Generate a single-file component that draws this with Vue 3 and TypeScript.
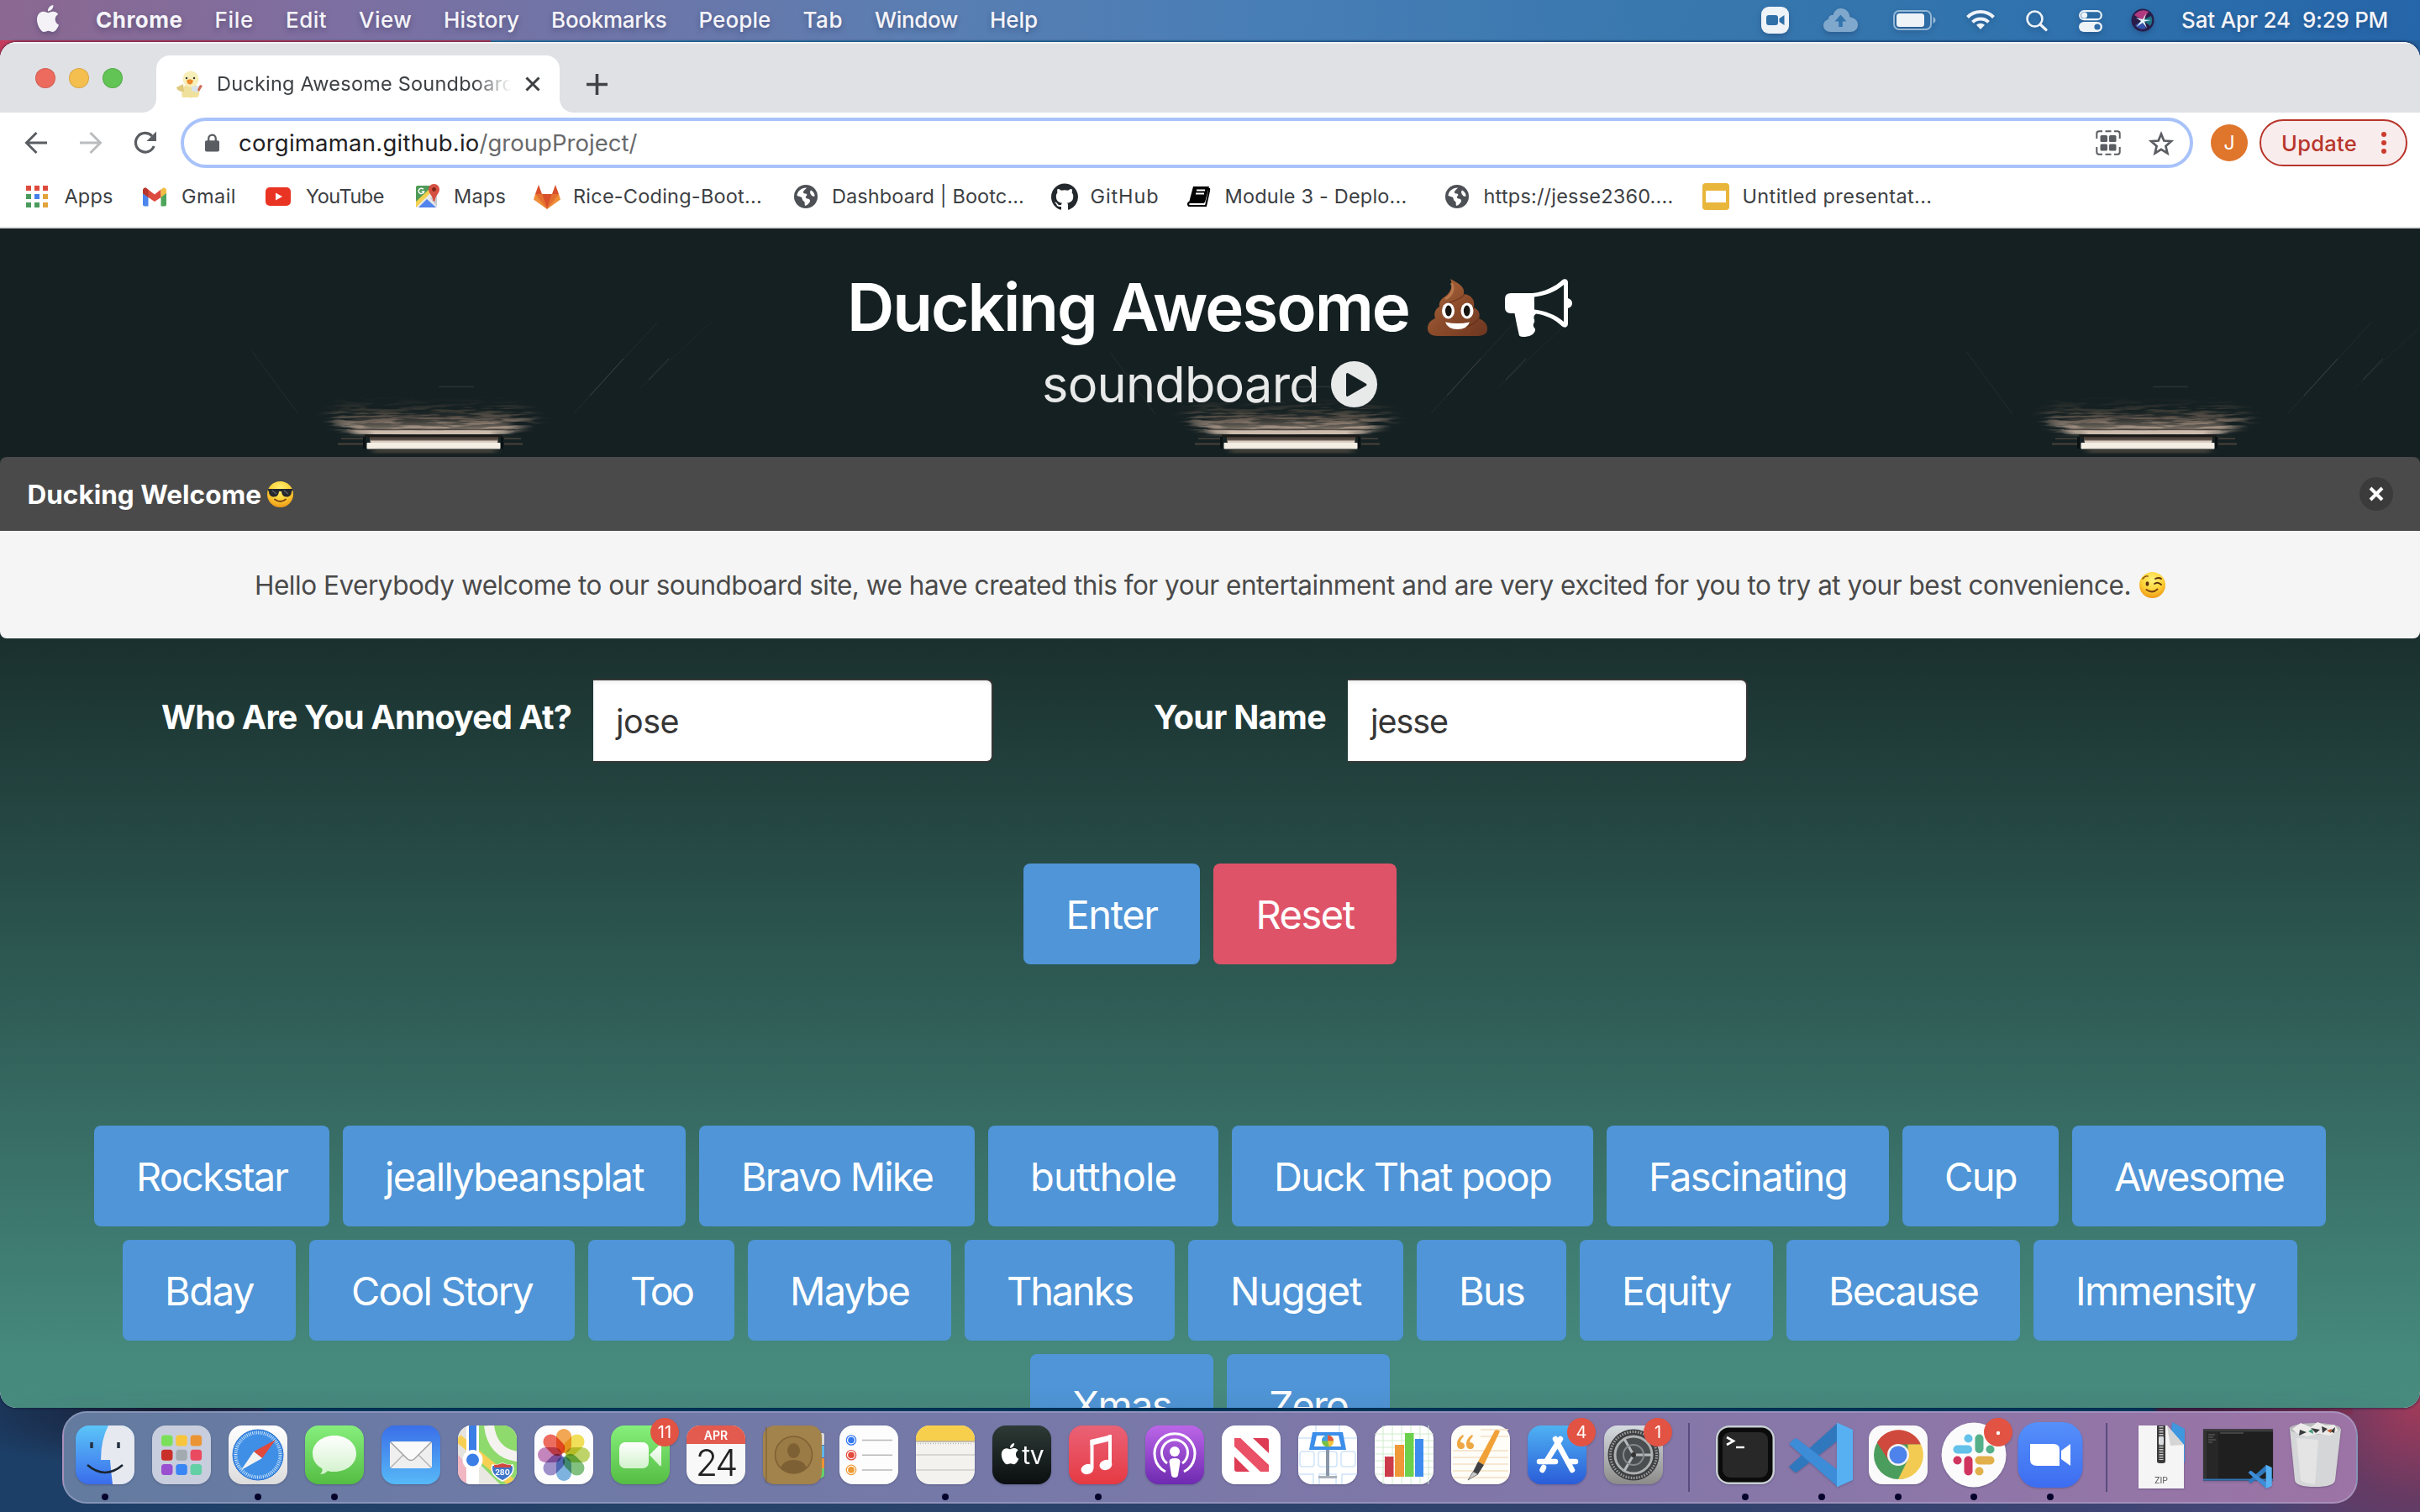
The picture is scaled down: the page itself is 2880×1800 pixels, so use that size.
<script setup lang="ts">
interface Label { text: string; w: number }
interface Bookmark extends Label { icon: string; iw: number; gap: number; after: number }

// Tracks a label so that it takes exactly the given advance width.
const vFit = {
  mounted(el: HTMLElement, binding: { value: number }) {
    const count = Array.from(el.textContent ?? '').length
    const natural = el.getBoundingClientRect().width
    el.style.letterSpacing = `${(binding.value - natural) / count}px`
  },
}

const menus: Label[] = [
  { text: 'Chrome', w: 103.5 }, { text: 'File', w: 46.6 }, { text: 'Edit', w: 49 },
  { text: 'View', w: 63 }, { text: 'History', w: 90 }, { text: 'Bookmarks', w: 137.4 },
  { text: 'People', w: 86 }, { text: 'Tab', w: 47.5 }, { text: 'Window', w: 99 }, { text: 'Help', w: 57 },
]

const bookmarks: Bookmark[] = [
  { icon: 'apps', text: 'Apps', iw: 26, gap: 19.5, w: 58, after: 35.5 },
  { icon: 'gmail', text: 'Gmail', iw: 28, gap: 18, w: 65, after: 35 },
  { icon: 'youtube', text: 'YouTube', iw: 30, gap: 18, w: 93, after: 38 },
  { icon: 'maps', text: 'Maps', iw: 28, gap: 17, w: 62, after: 33 },
  { icon: 'gitlab', text: 'Rice-Coding-Boot...', iw: 32, gap: 15, w: 225, after: 38 },
  { icon: 'globe', text: 'Dashboard | Bootc...', iw: 28, gap: 17, w: 229, after: 32 },
  { icon: 'github', text: 'GitHub', iw: 32, gap: 14.5, w: 82, after: 33 },
  { icon: 'book', text: 'Module 3 - Deplo...', iw: 28, gap: 17, w: 217, after: 45 },
  { icon: 'globe', text: 'https://jesse2360....', iw: 28, gap: 18, w: 226, after: 34 },
  { icon: 'slides', text: 'Untitled presentat...', iw: 32, gap: 16, w: 226, after: 0 },
]

const rows: Label[][] = [
  [
    { text: 'Rockstar', w: 280 }, { text: 'jeallybeansplat', w: 408 }, { text: 'Bravo Mike', w: 328 },
    { text: 'butthole', w: 274 }, { text: 'Duck That poop', w: 430 }, { text: 'Fascinating', w: 336 },
    { text: 'Cup', w: 186 }, { text: 'Awesome', w: 302 },
  ],
  [
    { text: 'Bday', w: 206 }, { text: 'Cool Story', w: 316 }, { text: 'Too', w: 174 }, { text: 'Maybe', w: 242 },
    { text: 'Thanks', w: 250 }, { text: 'Nugget', w: 256 }, { text: 'Bus', w: 178 }, { text: 'Equity', w: 230 },
    { text: 'Because', w: 278 }, { text: 'Immensity', w: 314 },
  ],
  [{ text: 'Xmas', w: 218 }, { text: 'Zero', w: 194 }],
]

const apps = [
  'finder', 'launchpad', 'safari', 'messages', 'mail', 'maps', 'photos', 'facetime', 'calendar', 'contacts',
  'reminders', 'notes', 'tv', 'music', 'podcasts', 'news', 'keynote', 'numbers', 'pages', 'appstore', 'settings',
  'sep', 'terminal', 'vscode', 'chrome', 'slack', 'zoom', 'sep', 'zip', 'window', 'trash',
]
const running = new Set(['finder', 'safari', 'messages', 'notes', 'music', 'terminal', 'vscode', 'chrome', 'slack', 'zoom'])
const badges: Record<string, string> = { facetime: '11', appstore: '4', settings: '1', slack: '•' }

const tiles: Record<string, string> = {
  launchpad: '#c8cedd', safari: 'url(#gWhite)', messages: 'url(#gGreen)', mail: 'url(#gMail)', photos: '#fdfdfd',
  facetime: 'url(#gGreen)', reminders: '#fdfdfd', tv: 'url(#gTv)', music: 'url(#gMusic)', podcasts: 'url(#gPod)',
  news: '#ffffff', keynote: '#ffffff', numbers: '#ffffff', pages: '#fffdf8', appstore: 'url(#gStore)',
  settings: 'url(#gSet)', chrome: '#fafafa',
}
const petals = ['#f29a38', '#f1dc3f', '#b6cf50', '#6fb86c', '#6aa9dc', '#8f80c4', '#bd72b5', '#ec5545']
const padColors = ['#7ae05a', '#f8c53c', '#ea9434', '#c9302a', '#a4abb0', '#ea4a60', '#9a4fd0', '#3a86f5', '#63cfa4']
const applePath = 'M12.152 6.896c-.948 0-2.415-1.078-3.96-1.04-2.04.027-3.91 1.183-4.961 3.014-2.117 3.675-.546 9.103 1.519 12.09 1.013 1.454 2.208 3.09 3.792 3.039 1.52-.065 2.09-.987 3.935-.987 1.831 0 2.35.987 3.96.948 1.637-.026 2.676-1.48 3.676-2.948 1.156-1.688 1.636-3.325 1.662-3.415-.039-.013-3.182-1.221-3.22-4.857-.026-3.04 2.48-4.494 2.597-4.559-1.429-2.09-3.623-2.324-4.39-2.376-2-.156-3.675 1.09-4.61 1.09zM15.53 3.83c.843-1.012 1.4-2.427 1.245-3.83-1.207.052-2.662.805-3.532 1.818-.78.896-1.454 2.338-1.273 3.714 1.338.104 2.715-.688 3.559-1.701'
</script>

<template>
  <div class="desktop">
    <header class="menubar">
      <svg class="apple" viewBox="0 0 24 24" preserveAspectRatio="none"><path :d="applePath" fill="#f4f2f6" /></svg>
      <nav class="menus"><span v-for="m in menus" :key="m.text" v-fit="m.w">{{ m.text }}</span></nav>
      <div class="status">
        <svg class="s-zoom" width="33" height="32" viewBox="0 0 33 32"><rect width="33" height="32" rx="9" fill="#eef3f8" /><rect x="6" y="10" width="14" height="12" rx="3" fill="#2f70a8" /><path d="M21.500 14l6-4v12l-6-4z" fill="#2f70a8" /></svg>
        <svg class="s-cloud" width="41" height="28" viewBox="0 0 41 28"><path d="M9 28C3.500 28 0 24.500 0 20.500c0-4 2.800-6.800 6-7.500C6 9 9 7.500 11.500 8 13 3 16 0 20.500 0 27 0 31 4.500 31.500 10.500 37 11 41 14.500 41 19.500 41 24.500 37 28 32 28z" fill="#80a8cc" /><path d="M20.500 7.500l7 8h-4.700V22h-4.600v-6.500h-4.700z" fill="#3374ad" /></svg>
        <svg class="s-batt" width="51" height="24" viewBox="0 0 51 24"><rect x="1" y="1" width="44" height="22" rx="6" fill="none" stroke="#93b7d6" stroke-width="2" /><rect x="4" y="4" width="33" height="16" rx="3.500" fill="#eef3f8" /><path d="M47.500 8c4 1.500 4 6.500 0 8z" fill="#93b7d6" /></svg>
        <svg class="s-wifi" width="34" height="24" viewBox="0 0 34 24"><g fill="none" stroke="#eef3f8" stroke-width="4"><path d="M1.500 9.500a22 22 0 0 1 31 0" /><path d="M7.500 15.300a13.500 13.500 0 0 1 19 0" /></g><path d="M17 24l-5-5.200a7.200 7.200 0 0 1 10 0z" fill="#eef3f8" /></svg>
        <svg class="s-find" width="26" height="25" viewBox="0 0 26 25"><circle cx="10.500" cy="10.500" r="9" fill="none" stroke="#eef3f8" stroke-width="2.600" /><path d="M17 17l7 6.500" stroke="#eef3f8" stroke-width="3.200" stroke-linecap="round" /></svg>
        <svg class="s-ctl" width="28" height="26" viewBox="0 0 28 26"><rect x="1.200" y="1.200" width="25.600" height="10" rx="5" fill="none" stroke="#eef3f8" stroke-width="2.200" /><circle cx="6.500" cy="6.200" r="3.600" fill="#eef3f8" /><rect y="14" width="28" height="12" rx="6" fill="#eef3f8" /><circle cx="22" cy="20" r="3.600" fill="#2e6ca8" /></svg>
        <svg class="s-siri" width="28" height="28" viewBox="0 0 28 28"><circle cx="14" cy="14" r="13.500" fill="#2a1c49" /><path d="M4 8a13 13 0 0 1 17-4L14 14z" fill="#b03a80" /><path d="M5 20l9-6 4 10a12 12 0 0 1-13-4z" fill="#3451a8" /><path d="M14 14l10-5a12 12 0 0 1-1 12z" fill="#1b7384" /><path d="M6 11l8 2 4-7-2 7.500 8 .5-8 1.500 3 8-5-6.500-7.500 5 5.500-7z" fill="#e6f6fb" /></svg>
        <span v-fit="130" class="date">Sat Apr 24</span><span v-fit="102">9:29 PM</span>
      </div>
    </header>

    <main class="window">
      <div class="tabstrip">
        <i class="light red" /><i class="light yellow" /><i class="light green" />
        <div class="tab">
          <svg width="32" height="32" viewBox="0 0 32 32"><ellipse cx="17" cy="24" rx="10" ry="8.500" fill="#efe19b" /><path d="M7 32q-2-6 1-12l16-1q6 7 1 13z" fill="#efe19b" /><circle cx="17" cy="10" r="9.500" fill="#f7efb8" /><path d="M0 20l8-4 1 9c-5 0-8-1-9-5z" fill="#dfc97c" /><path d="M12 12q4-3.500 8 0-1 4.500-4 4.500t-4-4.500z" fill="#ee8b2c" /><circle cx="12" cy="9" r="1.200" fill="#333" /><circle cx="21" cy="9" r="1.200" fill="#333" /><path d="M18 19l11-1-4 8-7-2z" fill="#d8e3ec" /><path d="M28 17l3 1-4 7-2-2z" fill="#cf6a55" /></svg>
          <div class="tab-title"><span v-fit="354">Ducking Awesome Soundboard</span></div>
          <svg class="tab-x" width="18" height="18" viewBox="0 0 18 18"><path d="M1.500 1.500l15 15m0-15l-15 15" stroke="#3c4043" stroke-width="3" /></svg>
        </div>
        <svg class="plus" width="25" height="25" viewBox="0 0 25 25"><path d="M12.500 0v25M0 12.500h25" stroke="#3f4246" stroke-width="3.600" /></svg>
      </div>

      <div class="toolbar">
        <svg class="back" width="28" height="28" viewBox="0 0 28 28"><path d="M27 14H3M14.500 2L2.500 14l12 12" fill="none" stroke="#5a5d61" stroke-width="3" /></svg>
        <svg class="fwd" width="28" height="28" viewBox="0 0 28 28"><path d="M1 14h24M13.500 2l12 12-12 12" fill="none" stroke="#babcbe" stroke-width="3" /></svg>
        <svg class="reload" width="28" height="28" viewBox="0 0 28 28"><path d="M24.200 18A11.300 11.300 0 1 1 22 6" fill="none" stroke="#5a5d61" stroke-width="3.200" /><path d="M27 .5V12H15.500z" fill="#5a5d61" /></svg>
        <div class="omnibox">
          <svg class="lock" width="17" height="22" viewBox="0 0 18 22"><rect y="8" width="18" height="14" rx="2" fill="#5a5d61" /><path d="M4.500 9V5.500a4.500 4.500 0 0 1 9 0V9" fill="none" stroke="#5a5d61" stroke-width="2.400" /></svg>
          <span v-fit="286.500" class="host">corgimaman.github.io</span><span v-fit="188" class="path">/groupProject/</span>
          <svg class="qr" width="30" height="30" viewBox="0 0 30 30"><path d="M1.300 10V4q0-2.700 2.700-2.700h4M11.500 1.300h7M22 1.300h4q2.700 0 2.700 2.700v6M1.300 20v6q0 2.700 2.700 2.700h4M11.500 28.700h7M22 28.700h4q2.700 0 2.700-2.700v-6" fill="none" stroke="#5a5d61" stroke-width="2" /><g fill="#5a5d61"><rect x="5.500" y="6" width="8.500" height="8" rx="1.500" /><rect x="16" y="6" width="8.500" height="8" rx="1.500" /><rect x="5.500" y="16.500" width="8.500" height="8" rx="1.500" /><rect x="16" y="16.500" width="8.500" height="8" rx="1.500" /></g></svg>
          <svg class="star" width="30" height="29" viewBox="0 0 30 29"><path d="M15 3.500l3.300 8 8.600.7-6.500 5.700 2 8.400L15 21.800l-7.400 4.500 2-8.400-6.500-5.700 8.600-.7z" fill="none" stroke="#5a5d61" stroke-width="2.700" /></svg>
        </div>
        <div class="avatar">J</div>
        <div class="update"><span v-fit="90">Update</span><svg width="6" height="26" viewBox="0 0 6 26"><circle cx="3" cy="3" r="3" /><circle cx="3" cy="13" r="3" /><circle cx="3" cy="23" r="3" /></svg></div>
      </div>

      <div class="bookmarks">
        <div v-for="(b, i) in bookmarks" :key="i" class="bm" :style="{ gap: b.gap + 'px', marginRight: b.after + 'px' }">
          <svg :width="b.iw" height="32" :viewBox="`0 0 ${b.iw} 32`">
            <g v-if="b.icon === 'apps'"><path d="M0 3h6v6H0zM10 3h6v6h-6zM20 3h6v6h-6z" fill="#dd4b3e" /><path d="M0 13h6v6H0z" fill="#4a9b5c" /><path d="M10 13h6v6h-6z" fill="#4680ea" /><path d="M20 13h6v6h-6z" fill="#e3a43b" /><path d="M0 23h6v6H0zM10 23h6v6h-6z" fill="#4a9b5c" /><path d="M20 23h6v6h-6z" fill="#e3a43b" /></g>
            <g v-else-if="b.icon === 'gmail'"><path d="M0 9v16.500q0 2 2 2h4.500V13z" fill="#4b86ee" /><path d="M28 9v16.500q0 2-2 2h-4.500V13z" fill="#4da55b" /><path d="M0 9q0-3.500 3.500-3.500L14 13.500l7.500-6V17L14 22 6.500 17 0 12z" fill="#dc4a3e" /><path d="M0 9q0-3.500 3.500-3.500L6.500 8v9L0 12z" fill="#b8352c" /><path d="M28 9q0-3.500-3.500-3.500L21.500 7.500V17L28 12z" fill="#f1bd42" /></g>
            <g v-else-if="b.icon === 'youtube'"><rect y="5" width="30" height="22" rx="5" fill="#e93323" /><path d="M12 11.500l8 4.500-8 4.500z" fill="#fff" /></g>
            <g v-else-if="b.icon === 'maps'"><path d="M0 5q0-2 2-2h18L0 25z" fill="#4f9a58" /><path d="M0 29L22 6l3 23z" fill="#e8e8e8" /><path d="M0 22v7L20 9l-3-3z" fill="#f3d04f" /><path d="M3 29l10-10 11 10z" fill="#5284ec" /><path d="M17 18l8 10V14z" fill="#c9ccd0" /><path d="M21.500 1c4 0 6.500 3 6.500 6.500 0 5-5 7-5.500 14h-2c-.5-7-5.500-9-5.500-14C15 4 17.500 1 21.500 1z" fill="#d55040" /><circle cx="21.500" cy="7.500" r="2.400" fill="#7c2419" /><path d="M8.800 7.200A3.200 3.200 0 1 0 9.600 10H6.700" fill="none" stroke="#fff" stroke-width="1.500" /></g>
            <g v-else-if="b.icon === 'gitlab'"><path d="M16 31L0 19.500 2 13h28l2 6.500z" fill="#ee8d39" /><path d="M16 31L10 13h12z" fill="#d9502c" /><path d="M16 31L2 13h8zM16 31l14-18h-8z" fill="#e4702f" /><path d="M2 13L6 2l4 11zM30 13L26 2l-4 11z" fill="#d9502c" /></g>
            <g v-else-if="b.icon === 'globe'"><circle cx="14" cy="16" r="14" fill="#4d5055" /><path d="M15 5.500c-1 2-4 3-4 5.500 0 2 3 1 4 2 1.500 2-2 2.500-1 4.500 1 1.500 4.500.5 5 3 .3 2.500-3 5.500-5.500 6.500-1.500-1 0-3.500-1.500-5-1-1-2.500-2-2.500-4S5 16 3.500 15C3.800 10 8 5.500 15 5.500zM20 8.500c2.500 1 5 4.500 4.500 7-2.500 1-3.500-.5-4.500-2s-1.500-3.500 0-5z" fill="#fff" /></g>
            <g v-else-if="b.icon === 'github'" transform="translate(0 .5) scale(2)"><path fill="#24292e" d="M8 0C3.580 0 0 3.580 0 8c0 3.540 2.290 6.530 5.470 7.590.4.070.55-.17.55-.38 0-.19-.01-.82-.01-1.490-2.010.37-2.530-.49-2.690-.94-.09-.23-.48-.94-.82-1.130-.28-.15-.68-.52-.01-.53.63-.01 1.080.58 1.230.82.72 1.210 1.870.87 2.330.66.07-.52.28-.87.51-1.070-1.780-.2-3.640-.89-3.640-3.950 0-.87.31-1.590.82-2.150-.08-.2-.36-1.020.08-2.120 0 0 .67-.21 2.200.82.64-.18 1.320-.27 2-.27s1.360.09 2 .27c1.530-1.040 2.200-.82 2.200-.82.44 1.100.16 1.920.08 2.120.51.56.82 1.270.82 2.150 0 3.070-1.870 3.750-3.650 3.950.29.25.54.73.54 1.480 0 1.070-.01 1.930-.01 2.200 0 .21.15.46.55.38A8.010 8.010 0 0 0 16 8c0-4.420-3.580-8-8-8z" /></g>
            <g v-else-if="b.icon === 'book'"><path d="M7 4h19l-5 19H2z" fill="#000" /><path d="M26 6l0 3-4 18H2q-2-2 0-4h18" fill="none" stroke="#000" stroke-width="2.200" /><path d="M11 8.500h10M10 12.500h10" stroke="#fff" stroke-width="2" /></g>
            <g v-else><rect width="32" height="32" rx="4" fill="#e9b63c" /><path d="M4 9h24v14H4z" fill="#fff" /></g>
          </svg>
          <span v-fit="b.w">{{ b.text }}</span>
        </div>
      </div>

      <section class="hero">
        <svg class="lamps" width="2880" height="272" viewBox="0 0 2880 272">
          <defs>
            <linearGradient id="rise" x1="0" y1="0" x2="0" y2="1"><stop offset="0" stop-color="#4a3f38" stop-opacity="0" /><stop offset=".5" stop-color="#77675a" stop-opacity=".55" /><stop offset="1" stop-color="#cdb9a8" /></linearGradient>
            <linearGradient id="beam"><stop offset="0" stop-color="#cdbba9" stop-opacity="0" /><stop offset=".16" stop-color="#cdbcae" /><stop offset=".84" stop-color="#cdbcae" /><stop offset="1" stop-color="#cdbba9" stop-opacity="0" /></linearGradient>
            <linearGradient id="tube" x1="0" y1="0" x2="0" y2="1"><stop offset="0" stop-color="#3a322d" /><stop offset="1" stop-color="#7a6b60" /></linearGradient>
            <filter id="soft" x="-20%" y="-60%" width="140%" height="220%"><feGaussianBlur stdDeviation="4 1.500" /></filter>
            <filter id="brick" x="-15%" y="-30%" width="130%" height="160%"><feGaussianBlur in="SourceGraphic" stdDeviation="9 3" result="g" /><feTurbulence type="fractalNoise" baseFrequency=".025 .28" numOctaves="3" seed="4" /><feColorMatrix values="0 0 0 0 1  0 0 0 0 1  0 0 0 0 1  5 0 0 0 -2.1" result="n" /><feComposite in="g" in2="n" operator="in" /></filter>
          </defs>
          <g v-for="x in [-504, 516, 1536, 2556]" :key="x" :transform="`translate(${x} 0)`">
            <path d="M-112 202H100L124 226 92 243H-98L-126 228z" fill="url(#rise)" filter="url(#brick)" />
            <path d="M-100 216H98L88 243H-90z" fill="url(#rise)" filter="url(#soft)" opacity=".75" />
            <rect x="-100" y="238.500" width="197" height="1.500" fill="#2c2724" opacity=".6" />
            <rect x="-102" y="240.500" width="200" height="4.500" fill="url(#beam)" />
            <path d="M-82 245.500h164v3h-164z" fill="#1a1918" />
            <path d="M-76 248H77v6H-76z" fill="url(#tube)" />
            <path d="M-84 248h3v14h-3zM80 248h3v14h-3z" fill="#0c1113" />
            <path d="M-75 252.500H76v3H-75z" fill="#d8ccc0" />
            <path d="M-110 249.500h26v1.500h-26zM84 249.500h20v1.500H84zM-114 255.500h30v2h-30zM84 255.500h22v2H84z" fill="#6b5a4a" opacity=".6" />
            <rect x="-79.500" y="255" width="159" height="7.500" rx="1" fill="#f3ede4" />
            <rect x="-72" y="263" width="146" height="4" fill="#7a6b58" opacity=".5" filter="url(#soft)" />
            <path d="M6 188.500h42" stroke="#33353a" stroke-width="1.500" opacity=".8" />
            <g stroke="#6b6a65" stroke-width="1" fill="none"><path d="M167 220l99-108" opacity=".18" /><path d="M186 199l40-44" opacity=".4" /><path d="M246 190l86-80" opacity=".12" /><path d="M256 180l24-25" opacity=".4" /><path d="M-216 146l55 75" opacity=".18" /></g>
          </g>
        </svg>
        <div class="title-row">
          <h1 v-fit="669">Ducking Awesome</h1>
          <svg class="poop" width="72" height="69" viewBox="0 0 72 69"><defs><linearGradient id="poo" x1="0" y1="0" x2="1" y2="1"><stop offset="0" stop-color="#b06c40" /><stop offset=".5" stop-color="#8c4c2b" /><stop offset="1" stop-color="#6d3620" /></linearGradient></defs><path d="M27 0c9 5 18 9 16 18 8 1 14 6 12 16 6 3 8 8 6 13 7 3 11 8 10 14-1 6-7 7-13 7H12C5 68 0 65 0 59c0-6 4-10 9-12-2-6 0-11 5-14-1-6 3-10 8-13 5-4 9-12 5-20z" fill="url(#poo)" /><path d="M44 18c-4 7-14 8-22 12M55 34c-3 5-8 7-14 8M61 47c-4 6-10 9-17 10" fill="none" stroke="#5c2c18" stroke-width="1.500" opacity=".6" /><path d="M28 5c5 7 0 15-7 19" fill="none" stroke="#c88658" stroke-width="3" opacity=".7" /><ellipse cx="24.500" cy="38" rx="7.500" ry="9.500" fill="#fff" /><ellipse cx="47" cy="38" rx="7.500" ry="9.500" fill="#fff" /><ellipse cx="24.800" cy="38" rx="3.800" ry="6.500" fill="#171310" /><ellipse cx="46.700" cy="38" rx="3.800" ry="6.500" fill="#171310" /><path d="M21 51.500q14.500 3 29 0-3 8.500-14.500 8.500T21 51.500z" fill="#fff" /></svg>
          <svg class="horn" width="80" height="69" viewBox="0 0 80 69"><path fill="#fff" fill-rule="evenodd" d="M7 17H33C47 15.500 60 9 68 1.500Q70-.5 73 .5 75 1.500 75 4V23q5 1.500 5 6t-5 6V53.500q0 3-2.500 4-2.500.5-4.500-1C59 48 50 43.500 37 41.500q-4 3-2 7 1 3-1 5-1 3 2 6 .5 3-3 6.500Q29 69 24 69q-5 .5-7-1.500Q14 55 11.500 41H7Q0 41 0 34V24q0-7 7-7zM35 21.500V36.500C48 38 60 42.500 70 51V7C60 15.500 48 20 35 21.500z" /></svg>
        </div>
        <div class="sub-row">
          <h2 v-fit="330">soundboard</h2>
          <svg width="55" height="55" viewBox="0 0 55 55"><circle cx="27.500" cy="27.500" r="27.500" fill="#e8e9e9" /><path d="M19.500 15.500L41 28 19.500 40.500z" fill="#152022" stroke="#152022" stroke-width="3" stroke-linejoin="round" /></svg>
        </div>
      </section>

      <section class="page">
        <article class="message">
          <div class="message-head">
            <strong v-fit="278.500">Ducking Welcome</strong>
            <svg width="31" height="31" viewBox="0 0 31 31"><defs><radialGradient id="face" cx=".5" cy=".3" r=".75"><stop offset="0" stop-color="#fff27a" /><stop offset=".55" stop-color="#fdd135" /><stop offset="1" stop-color="#ec8f12" /></radialGradient></defs><circle cx="15.500" cy="15.500" r="15.500" fill="url(#face)" /><path d="M1 9h29v2l-1 1c0 4-2 6.500-6 6.500-4.500 0-5.500-3-6-6.500h-3c-.5 3.500-1.500 6.500-6 6.500-4 0-6-2.500-6-6.500l-1-1z" fill="#25282c" /><path d="M6 11l5 4M20 11l5 4" stroke="#59636d" stroke-width="1.500" /><path d="M9 21.500q6.500 5 13 0" fill="none" stroke="#7a4210" stroke-width="2" stroke-linecap="round" /></svg>
            <span class="close"><svg width="18" height="18" viewBox="0 0 18 18"><path d="M2 2l14 14m0-14l-14 14" stroke="#fff" stroke-width="4" /></svg></span>
          </div>
          <div class="message-body">
            <p v-fit="2233">Hello Everybody welcome to our soundboard site, we have created this for your entertainment and are very excited for you to try at your best convenience.</p>
            <svg width="31" height="31" viewBox="0 0 31 31"><circle cx="15.500" cy="15.500" r="15.500" fill="url(#face)" /><path d="M4 8q3-4 6-3" fill="none" stroke="#8a5212" stroke-width="1.600" stroke-linecap="round" /><ellipse cx="9.500" cy="14" rx="1.900" ry="2.800" fill="#5c3310" /><path d="M18 14q4-3 8 1M19 8q4-2 7 0" fill="none" stroke="#5c3310" stroke-width="1.900" stroke-linecap="round" /><path d="M8.500 21q7 5 13-.5" fill="none" stroke="#7a4210" stroke-width="2" stroke-linecap="round" /></svg>
          </div>
        </article>

        <form class="names">
          <label v-fit="488" class="who">Who Are You Annoyed At?</label>
          <div class="field"><span v-fit="75">jose</span></div>
          <label v-fit="205" class="your">Your Name</label>
          <div class="field"><span v-fit="92">jesse</span></div>
        </form>

        <div class="actions">
          <button type="button" style="width: 210px"><span v-fit="109">Enter</span></button>
          <button type="button" class="danger" style="width: 218px"><span v-fit="117">Reset</span></button>
        </div>

        <div class="sounds">
          <div v-for="(row, i) in rows" :key="i" class="row">
            <button v-for="s in row" :key="s.text" type="button" :style="{ width: s.w + 'px' }"><span v-fit="s.w - 100">{{ s.text }}</span></button>
          </div>
        </div>
        <div class="shade" />
      </section>
    </main>

    <footer class="dock">
      <svg class="defs" width="0" height="0"><defs>
        <linearGradient id="gWhite" x2="0" y2="1"><stop stop-color="#fff" /><stop offset="1" stop-color="#dcdcdc" /></linearGradient>
        <linearGradient id="gGreen" x2="0" y2="1"><stop stop-color="#86ef7c" /><stop offset="1" stop-color="#55bd43" /></linearGradient>
        <linearGradient id="gMail" x2="0" y2="1"><stop stop-color="#3a6fe9" /><stop offset="1" stop-color="#57b9f7" /></linearGradient>
        <linearGradient id="gTv" x2="0" y2="1"><stop stop-color="#2d3a36" /><stop offset="1" stop-color="#0a0e10" /></linearGradient>
        <linearGradient id="gMusic" x2="0" y2="1"><stop stop-color="#ea6276" /><stop offset="1" stop-color="#e63a43" /></linearGradient>
        <linearGradient id="gPod" x2="0" y2="1"><stop stop-color="#bc66e8" /><stop offset="1" stop-color="#6d2ab0" /></linearGradient>
        <linearGradient id="gStore" x2="0" y2="1"><stop stop-color="#4fb2f3" /><stop offset="1" stop-color="#2a5cd8" /></linearGradient>
        <linearGradient id="gSet" x2="0" y2="1"><stop stop-color="#d5dbe0" /><stop offset="1" stop-color="#8c8b89" /></linearGradient>
        <linearGradient id="gFinder" x2="0" y2="1"><stop stop-color="#5bc5f8" /><stop offset="1" stop-color="#3a6cec" /></linearGradient>
        <linearGradient id="gZoom" x2="0" y2="1"><stop stop-color="#5590fb" /><stop offset="1" stop-color="#3d6df0" /></linearGradient>
        <linearGradient id="gBub" x2="0" y2="1"><stop stop-color="#fff" /><stop offset="1" stop-color="#d2f2cc" /></linearGradient>
        <clipPath id="tile"><rect x="-35" y="-35" width="70" height="70" rx="16" /></clipPath>
      </defs></svg>
      <template v-for="(a, i) in apps" :key="i">
        <div v-if="a === 'sep'" class="sep" />
        <div v-else class="cell">
          <svg width="70" height="70" viewBox="-35 -35 70 70">
            <rect v-if="tiles[a]" x="-35" y="-35" width="70" height="70" rx="16" :fill="tiles[a]" />
            <g v-if="a === 'finder'" clip-path="url(#tile)"><rect x="-35" y="-35" width="70" height="70" fill="url(#gFinder)" /><path d="M4-35H35v70H9Q7 20 6 6H-5Q-5-18 4-35z" fill="#e6e9f0" /><path d="M-16-15v7M16-15v7" stroke="#23303f" stroke-width="3.500" /><path d="M-21 12Q0 30 21 12" fill="none" stroke="#1b2430" stroke-width="2.600" /></g>
            <g v-else-if="a === 'launchpad'"><rect v-for="(c, n) in padColors" :key="n" :x="-24 + (n % 3) * 17.300" :y="-23.500 + Math.floor(n / 3) * 17.300" width="13.500" height="13" rx="3.500" :fill="c" /></g>
            <g v-else-if="a === 'safari'"><circle r="30" fill="#3f8fe6" stroke="#2c6fce" stroke-width="1" /><circle r="26.500" fill="none" stroke="#e8f3fd" stroke-width="4" stroke-dasharray=".8 1.500" /><path d="M21-18L5 4-5-4z" fill="#e0493c" /><path d="M-20 18L-5-4 5 4z" fill="#f3f3f3" /></g>
            <g v-else-if="a === 'messages'"><path d="M0-23c15 0 26 9.500 26 21.500S15 20 0 20c-3 0-6 0-8-1-3 3-6 4-9 4 3-3 3-5 2-7-7-4-11-10-11-17.500C-26-13.500-15-23 0-23z" fill="url(#gBub)" /></g>
            <g v-else-if="a === 'mail'"><rect x="-25" y="-16" width="50" height="32" rx="3" fill="#efefef" /><path d="M-24 15L-8-1M24 15L8-1" stroke="#b5b5b5" stroke-width="1.500" /><path d="M-24-15L-4 5q4 3 8 0L24-15" fill="#fafafa" stroke="#a2a2a2" stroke-width="1.500" /></g>
            <g v-else-if="a === 'maps'" clip-path="url(#tile)"><rect x="-35" y="-35" width="70" height="70" fill="#ecebe6" /><path d="M-35-35h20v40h-20z" fill="#e4e3de" /><path d="M-12-35H35V35H10L-12 10z" fill="#8fda6d" /><path d="M-10 10V35H15z" fill="#e9e8e3" /><path d="M-35 0l10 10v25h-10z" fill="#f0b6c2" /><path d="M-35-20L35 38" stroke="#f7cf52" stroke-width="10" /><path d="M2-35Q6-2 36 2" fill="none" stroke="#f4f3ef" stroke-width="12" /><path d="M-25-35h15v70h-15z" fill="#fff" /><path d="M-22-35h9V6h-9z" fill="#3b7fe6" /><circle cx="-17.500" cy="6" r="12" fill="#fff" /><circle cx="-17.500" cy="6" r="7.500" fill="#3b7fe6" /><path d="M6 12q6 1 12-2 6 3 12 2 4 11-12 19Q2 23 6 12z" fill="#3f76c9" stroke="#fff" stroke-width="1.500" /><path d="M8 12q5 0 10-2 5 2 10 2v3H8z" fill="#d3473e" /><text x="18" y="24" text-anchor="middle" font-size="9" font-weight="700" fill="#fff">280</text></g>
            <g v-else-if="a === 'photos'"><rect v-for="(c, n) in petals" :key="n" x="-9" y="-31" width="18" height="29" rx="9" :fill="c" opacity=".86" :transform="`rotate(${n * 45})`" style="mix-blend-mode: multiply" /></g>
            <g v-else-if="a === 'facetime'"><rect x="-25" y="-15" width="35" height="31" rx="7" fill="url(#gBub)" /><path d="M11 0l12-12q2-1 2 1v23q0 2-2 1z" fill="url(#gBub)" /></g>
            <g v-else-if="a === 'calendar'" clip-path="url(#tile)"><rect x="-35" y="-35" width="70" height="70" fill="#f8f8f8" /><path d="M-35-35h70v22h-70z" fill="#e35a4e" /><text y="-18.500" text-anchor="middle" font-size="14" font-weight="600" fill="#fff">APR</text><text y="25" text-anchor="middle" font-size="43" font-weight="300" letter-spacing="-2" fill="#222">24</text></g>
            <g v-else-if="a === 'contacts'"><path d="M28-26h8q2 0 2 2v12H28z" fill="#d9d9d4" /><path d="M28-11h10V3H28z" fill="#5fb6e8" /><path d="M28 4h10v12H28z" fill="#ef9334" /><path d="M28 16h10v8q0 3-6 4z" fill="#68cf68" /><rect x="-35" y="-35" width="70" height="70" rx="14" fill="#a3834c" /><path d="M-31-33v66" stroke="#84683a" stroke-width="1.500" /><circle cx="1.500" r="22" fill="#9b7b45" stroke="#7d6134" stroke-width="1.500" /><ellipse cx="1.500" cy="-5" rx="7.500" ry="9" fill="#7d6134" /><path d="M-14 15q4-9 15.500-9T17 15q-6 7-15.500 7T-14 15z" fill="#7d6134" /></g>
            <g v-else-if="a === 'reminders'"><g v-for="(c, n) in ['#3478f0', '#e34b3c', '#ee9a34']" :key="n" :transform="`translate(0 ${-17.500 + n * 17.700})`"><circle cx="-21" r="5.700" fill="none" :stroke="c" stroke-width="1.200" /><circle cx="-21" r="3.800" :fill="c" /><path d="M-8 0H28" stroke="#b9b9bd" stroke-width="1.500" /></g></g>
            <g v-else-if="a === 'notes'" clip-path="url(#tile)"><rect x="-35" y="-35" width="70" height="70" fill="#f3f2ee" /><path d="M-35-35h70v18h-70z" fill="#f8cf4c" /><path d="M-35-16h70" stroke="#b7a98a" stroke-width="1.500" /><path d="M-33-13.500h66" stroke="#bbb" stroke-width="1.500" stroke-dasharray="1 2" /><path d="M-35 0h70M-35 18h70" stroke="#cfcec9" stroke-width="1.500" /></g>
            <g v-else-if="a === 'tv'"><path :d="applePath" transform="translate(-26.500 -14) scale(1.050)" fill="#fff" /><text x="13" y="11" text-anchor="middle" font-size="30" letter-spacing="-1" fill="#fff">tv</text></g>
            <g v-else-if="a === 'music'" fill="#fff"><path d="M-9.500-18L16-24v7L-9.500-11z" /><path d="M-9.500-18h4v34h-4zM12-24h4V10h-4z" /><ellipse cx="-13" cy="17" rx="7.500" ry="6" transform="rotate(-15 -13 17)" /><ellipse cx="9" cy="12" rx="7.500" ry="6" transform="rotate(-15 9 12)" /></g>
            <g v-else-if="a === 'podcasts'"><path d="M-11 20a24 24 0 1 1 22 0" fill="none" stroke="#fff" stroke-width="3" /><path d="M-9 10a15.500 15.500 0 1 1 18 0" fill="none" stroke="#fff" stroke-width="3" /><circle cy="-4" r="6" fill="#fff" /><path d="M-6.500 8q0-4 6.500-4t6.500 4L4 24q-.5 3-4 3t-4-3z" fill="#fff" /></g>
            <g v-else-if="a === 'news'"><path d="M-20-20h7L21 12v8h-8L-20-12z" fill="#e84a60" /><path d="M-20-17q0-3 3-3h4L21 15v5H11L-20-10z" fill="#ea5066" /><path d="M2-20H18q3 0 3 3V-2zM-20 2v15q0 3 3 3H-2z" fill="#dd3c54" /></g>
            <g v-else-if="a === 'keynote'"><g fill="none" stroke="#cfe4f8" stroke-width="1.500"><rect x="-33" y="-4" width="17" height="18" rx="3" /><rect x="-11" y="-4" width="22" height="18" rx="3" /><rect x="16" y="-4" width="17" height="18" rx="3" /><path d="M-35-20h70M-14-35v12M14-35v12M-35 23h18v12M35 23H17v12M-10 35V23h20v12" /></g><path d="M-18-27h36l4 21h-44z" fill="#3c8eea" /><path d="M-13-23h26l3 13h-32z" fill="#fff" /><circle cy="-16.500" r="7" fill="#79c143" /><path d="M0-16.500v-7a7 7 0 0 1 7 7z" fill="#e35a3f" /><path d="M0-16.500h7a7 7 0 0 1-5 7z" fill="#f3c53f" /><path d="M0-16.500H-7a7 7 0 0 1 7-7z" fill="#3f9fe8" /><path d="M-2-6h4v33h-4z" fill="#8a97a8" /><path d="M-11 25h22v3h-22z" fill="#aab1ba" /></g>
            <g v-else-if="a === 'numbers'"><path d="M-35-25h70M-35-17h70M-35-9h70M-35-1h70M-35 7h70M-35 15h70M-35 23h70M-25-35v70M-14-35v70M-3-35v70M8-35v70M19-35v70M29-35v70" stroke="#cfeccb" stroke-width="1" /><path d="M-23 2h10.500v24H-23z" fill="#cc3b48" /><path d="M-11-12H0v38h-11z" fill="#ee9838" /><path d="M1-26h10.500v52H1z" fill="#6bd14c" /><path d="M13-19h10v45H13z" fill="#3d8df0" /></g>
            <g v-else-if="a === 'pages'"><path d="M0-30h33M0-22h33M-33-5h66M-33 3h66M-33 11h66M-33 19h66M-33 27h66" stroke="#f4dfc5" stroke-width="1.500" /><path d="M-21-24c-5 3-7 7-7 11 0 4 2 6 5 6s4-2 4-4-2-4-5-4c0-3 2-5 4-7zM-10-24c-5 3-7 7-7 11 0 4 2 6 5 6s4-2 4-4-2-4-5-4c0-3 2-5 4-7z" fill="#eea843" /><path d="M17-29q3-2 6 1L4 12l-7-4z" fill="#f0a238" /><path d="M-3 8l7 4-7 11-6-3z" fill="#3f4144" /><path d="M-9 20l6 3-12 7z" fill="#c9c9c9" stroke="#555" stroke-width=".7" /></g>
            <g v-else-if="a === 'appstore'" stroke="#fff" stroke-width="6.500" stroke-linecap="round"><path d="M4-19L-13 8M-16 15l-1.500 3M-2-19L18 18M-21 8H-2M13 8h9" /></g>
            <g v-else-if="a === 'settings'"><circle r="30.500" fill="#3c3e40" /><circle r="27.500" fill="none" stroke="#9b9d9e" stroke-width="3" stroke-dasharray="1.600 1.600" /><circle r="22" fill="#4b4e50" stroke="#aeb1b2" stroke-width="3" /><g stroke="#b7babb" stroke-width="3"><path d="M0 0H22M0 0L-11-19M0 0L-11 19" /></g><circle r="12" fill="none" stroke="#85888a" stroke-width="2" /><circle r="3" fill="#333" /></g>
            <g v-else-if="a === 'terminal'"><rect x="-35" y="-35" width="70" height="70" rx="16" fill="#c9cfd3" /><rect x="-32.500" y="-32.500" width="65" height="65" rx="13" fill="#0b0b0b" /><rect x="-27" y="-27" width="54" height="54" rx="9" fill="#282828" /><path d="M-22-21l8 4.500-8 4.500" fill="none" stroke="#fff" stroke-width="2.600" /><path d="M-11-9h10" stroke="#fff" stroke-width="2.400" /></g>
            <g v-else-if="a === 'vscode'"><path d="M-39 14l6 6q2 1 4 0L19-17v-21z" fill="#2f78bd" /><path d="M-39-13l6-6q2-1 4 0L19 18v20z" fill="#3d8cd8" /><path d="M18-38.500L37-30v60L18 38.500z" fill="#56b0f2" /></g>
            <g v-else-if="a === 'chrome'"><circle r="29" fill="#4b9d5d" /><path d="M-25.100-14.500A29 29 0 0 1 25.100-14.500L12.500-13H0z" fill="#cf4a3c" /><path d="M-25.100-14.500A29 29 0 0 1 27-12.500H0L-11 7z" fill="#cf4a3c" /><path d="M27-12.500A29 29 0 0 1 0 29L11.500 6V-12.500z" fill="#f3cb52" /><circle r="13" fill="#f3f3f3" /><circle r="10.500" fill="#4d83ea" /></g>
            <g v-else-if="a === 'slack'"><circle r="38.500" fill="#fbfbfb" /><g stroke-width="10" stroke-linecap="round"><path d="M-19.500-6.500H-7" stroke="#63c1ea" /><path d="M-6.500-19.500v0" stroke="#63c1ea" /><path d="M6.500-19.500V-7" stroke="#55b08a" /><path d="M19.500-6.500v0" stroke="#55b08a" /><path d="M6.500 6.500H19.500" stroke="#e2b04a" /><path d="M6.500 19.500v0" stroke="#e2b04a" /><path d="M-6.500 6.500v13" stroke="#cf355f" /><path d="M-19.500 6.500v0" stroke="#cf355f" /></g></g>
            <g v-else-if="a === 'zoom'"><rect x="-38.500" y="-39" width="77" height="78" rx="24" fill="url(#gZoom)" /><path d="M-24-13H4q7 0 7 7v19h-27q-8 0-8-7z" fill="#fff" /><path d="M13-5l11-8v26l-11-8z" fill="#fff" /></g>
            <g v-else-if="a === 'zip'"><path d="M12-39l15 8v40H8z" fill="#3f97df" /><path d="M-28-35H6L26-12v52h-54z" fill="#f5f5f5" /><path d="M6-35q2 14 4 24l16-1z" fill="#d5d5d5" /><path d="M-6-35h10V8q0 2-5 2t-5-2z" fill="#3c3c3c" /><path d="M-1-34V6" stroke="#c9c9c9" stroke-width="5" stroke-dasharray="1.500 1.500" /><rect x="-4" y="-22" width="6" height="10" rx="2" fill="#dadde0" /><text y="33.500" x="-1" text-anchor="middle" font-size="10.500" fill="#555">ZIP</text></g>
            <g v-else-if="a === 'window'"><path d="M-42-30.500h83v61h-83z" fill="#1f1f1f" /><path d="M-42-30.500h83v3h-83z" fill="#3a3a3a" /><path d="M-42-27.500h4v56h-4z" fill="#333" /><path d="M-38-27.500h14v56h-14z" fill="#272727" /><path d="M-42 28.500h83v2h-83z" fill="#3576b8" /><path d="M-36-24h8m-8 3h6m-6 3h9m-9 3h5M-22-26h28" stroke="#666" stroke-width="1" /><g transform="translate(26 26) scale(.37)"><path d="M-39 14l6 6q2 1 4 0L19-17v-21z" fill="#2f78bd" /><path d="M-39-13l6-6q2-1 4 0L19 18v20z" fill="#3d8cd8" /><path d="M18-38.500L37-30v60L18 38.500z" fill="#56b0f2" /></g></g>
            <g v-else-if="a === 'trash'"><path d="M-30-31L-24 30q1 8 24 8t24-8L31-31z" fill="#d5d6d7" /><path d="M-22-20L-17 30q4 4 17 5L4-18z" fill="#e4e4e5" /><ellipse cy="-31" rx="30.500" ry="7" fill="#b9babb" /><path d="M-27-31l10-7 12 5 8-6 10 4 10-1 5 7-10 6-14-2-14 3-12-4z" fill="#ecebea" /><path d="M-18-30l8 3-9 4zM8-34l7 3-6 5zM-5-32l6 6 5-4zM18-28l6-5-1 7z" fill="#3a3b3d" /><path d="M-8-28l5-3 1 6z" fill="#4b9d7d" /><path d="M14-29l6-2-1 5z" fill="#c0603a" /></g>
            <g v-if="badges[a]"><circle cx="29" cy="-27" r="17" fill="#e25343" /><circle v-if="a === 'slack'" cx="29" cy="-26" r="2.200" fill="#fff" /><text v-else x="29" y="-20" text-anchor="middle" font-size="20" fill="#fff">{{ badges[a] }}</text></g>
          </svg>
          <i v-if="running.has(a)" class="dot" />
        </div>
      </template>
    </footer>
  </div>
</template>

<style>
html, body { margin: 0; background: #1c3f67; }
</style>

<style scoped>
.desktop {
  width: 2880px; height: 1800px; overflow: hidden; box-sizing: border-box;
  display: flex; flex-direction: column;
  font-family: Inter, "Liberation Sans", sans-serif;
  background:
    radial-gradient(circle 230px at 2880px 1670px, #a33a59 0, rgba(120, 50, 85, .6) 50%, transparent 100%),
    linear-gradient(to right, #c73c5d 0 584px, transparent 584px) 0 0 / 100% 100px no-repeat,
    linear-gradient(to right, transparent 0, transparent 310px, #00395f 320px, #00395f 2560px, #401f40 2570px, #5a2445) 0 1670px / 2800px 14px no-repeat,
    radial-gradient(ellipse 260px 70px at 190px 1680px, #191d34, rgba(25, 29, 52, 0)),
    linear-gradient(to right, #1c3f67, #284369 35%, #33426e 75%, #4a4779) 0 1000px / 100% 800px no-repeat,
    linear-gradient(to right, #3c8fc0, #255e9c);
}
svg { flex: none; display: block; overflow: visible; }
span, strong, label, p, h1, h2 { display: inline-block; flex: none; white-space: pre; margin: 0; }

.menubar {
  flex: none; height: 48px; display: flex; align-items: center; color: #f5f4f8; font-size: 26px; font-weight: 500; line-height: 48px;
  background: linear-gradient(to right, #8b6891, #7d6fa1 14%, #6c76a9 27%, #5a7eb2 38%, #487eb6 52%, #3978ae 68%, #2f72ad 85%, #2565a9);
}
.apple { width: 32px; height: 32px; margin: -4px 0 0 41px; }
.menus { display: flex; gap: 38px; margin-left: 41px; text-shadow: 0 3px 6px rgba(30, 30, 70, .35); }
.menus span:first-child { font-weight: 700; }
.apple, .status svg { filter: drop-shadow(0 3px 3px rgba(20, 40, 80, .3)); }
.status { display: flex; align-items: center; margin-left: auto; padding-right: 38px; text-shadow: 0 3px 6px rgba(20, 40, 80, .35); }
.s-cloud { margin-left: 41px; }
.s-batt { margin-left: 42px; }
.s-wifi { margin-left: 36px; margin-top: -2px; }
.s-find { margin-left: 37px; }
.s-ctl { margin-left: 37px; margin-top: 2px; }
.s-siri { margin-left: 34px; }
.date { margin: 0 14px 0 32px; }

.window {
  flex: none; height: 1626px; margin-top: 2px; border-radius: 20px; overflow: hidden;
  display: flex; flex-direction: column; background: #fff; box-shadow: 0 0 3px 1px rgba(10, 20, 50, .55);
}
.tabstrip { flex: none; height: 84px; display: flex; background: #dfe1e5; box-shadow: inset 0 2px 0 #f1f2f4; }
.light { width: 24px; height: 24px; border-radius: 50%; margin-top: 31px; margin-right: 16px; box-shadow: inset 0 0 0 1px rgba(0, 0, 0, .12); }
.red { background: #ed6a5e; margin-left: 42px; }
.yellow { background: #f5bf4f; }
.green { background: #61c454; margin-right: 40px; }
.tab { position: relative; width: 480px; height: 68px; margin-top: 16px; box-sizing: border-box; display: flex; align-items: center; padding-left: 24px; background: #fff; border-radius: 16px 16px 0 0; }
.tab::before, .tab::after { content: ""; position: absolute; bottom: 0; width: 16px; height: 16px; }
.tab::before { left: -16px; background: radial-gradient(circle at 0 0, transparent 15.500px, #fff 16px); }
.tab::after { right: -16px; background: radial-gradient(circle at 100% 0, transparent 15.500px, #fff 16px); }
.tab-title { width: 354px; margin-left: 16px; font-size: 23.500px; line-height: 40px; color: #3c4043; -webkit-mask: linear-gradient(to right, #000 86%, transparent 99%); mask: linear-gradient(to right, #000 86%, transparent 99%); }
.tab-x { margin-left: 13px; }
.plus { margin: 38px 0 0 32px; }

.toolbar { flex: none; height: 72px; display: flex; align-items: center; padding-left: 29px; }
.fwd { margin-left: 37px; }
.reload { margin-left: 37px; }
.omnibox { width: 2395px; height: 60px; box-sizing: border-box; margin-left: 28px; border: 4px solid #a8c2fa; border-radius: 30px; display: flex; align-items: center; padding: 0 19px 0 25px; font-size: 27.500px; line-height: 52px; }
.lock { margin-right: 23px; }
.host { color: #1f2124; }
.path { color: #68696c; }
.qr { margin-left: auto; }
.star { margin-left: 33px; }
.avatar { width: 44px; height: 44px; border-radius: 50%; margin-left: 21px; background: #e0752c; color: #fff; font-size: 23px; line-height: 44px; text-align: center; }
.update { width: 176px; height: 56px; box-sizing: border-box; margin-left: 14px; display: flex; align-items: center; justify-content: space-between; padding: 0 23px 0 24px; border: 2px solid #b7352b; border-radius: 28px; background: #f9ecec; color: #b7352b; font-size: 25.500px; font-weight: 500; }
.update svg { fill: #cb3b2f; }

.bookmarks { flex: none; height: 66px; box-sizing: border-box; display: flex; align-items: center; padding: 0 0 9px 31px; border-bottom: 2px solid #dcdddf; font-size: 23.500px; line-height: 32px; color: #3c4043; }
.bm { flex: none; display: flex; align-items: center; }

.hero { flex: none; position: relative; height: 272px; background: #152022; box-sizing: border-box; padding-top: 50px; }
.lamps { position: absolute; inset: 0; overflow: hidden; }
.title-row, .sub-row { position: relative; display: flex; align-items: center; }
.title-row { height: 88px; padding-left: 1008px; }
h1 { font-size: 78px; line-height: 88px; font-weight: 600; color: #fff; }
.poop { margin-left: 22px; }
.horn { margin-left: 20px; }
.sub-row { height: 70px; margin-top: 12px; padding-left: 1240px; }
h2 { font-size: 59.500px; line-height: 70px; font-weight: 400; color: #e8e9e9; }
.sub-row svg { margin-left: 14px; }

.page { flex: 1; position: relative; background: linear-gradient(to bottom, #152422 0, #1a302e 216px, #2e5a54 626px, #45887c 1060px, #478a7e 1132px); }
.message { border-radius: 8px; overflow: hidden; }
.message-head { height: 88px; box-sizing: border-box; display: flex; align-items: center; padding: 0 32px 0 32.500px; background: #4a4a4a; color: #fff; font-size: 31.500px; line-height: 88px; }
.message-head strong { padding-top: 1px; }
.message-head svg { margin-left: 7px; }
.close { margin-left: auto; width: 40px; height: 40px; border-radius: 50%; background: #3b3b3b; }
.message-head .close svg { margin: 11px; }
.message-body { height: 128px; box-sizing: border-box; display: flex; align-items: center; padding: 1px 0 0 303px; background: #f5f5f5; color: #4a4a4a; font-size: 31.500px; line-height: 127px; }
.message-body svg { margin-left: 10px; }

.names { display: flex; align-items: flex-start; margin-top: 48px; height: 100px; }
.names label { font-size: 39.500px; font-weight: 700; color: #fff; line-height: 92px; }
.who { margin-left: 192px; }
.field { width: 476px; height: 100px; box-sizing: border-box; border: 2px solid #363636; border-left: 0; border-radius: 0 8px 8px 0; background: #fff; box-shadow: inset 0 3px 4px rgba(10, 10, 10, .06); padding-left: 27px; font-size: 39.500px; line-height: 99px; color: #363636; margin-left: 26px; }
.your { margin-left: 191px; }

button { flex: none; height: 120px; padding: 2px 0 0; border: 0; border-radius: 8px; background: #4f95d7; color: #fff; font: 400 47px/118px Inter, sans-serif; display: flex; justify-content: center; }
.danger { background: #df5369; }
.actions { display: flex; justify-content: center; gap: 16px; margin-top: 120px; }
.sounds { display: flex; flex-direction: column; gap: 16px; margin-top: 192px; }
.row { display: flex; justify-content: center; gap: 16px; }
.shade { position: absolute; left: 0; right: 0; bottom: 0; height: 80px; background: linear-gradient(to bottom, transparent, rgba(50, 40, 30, .13)); -webkit-mask: linear-gradient(to right, transparent 0, #000 250px, #000 2630px, transparent); mask: linear-gradient(to right, transparent 0, #000 250px, #000 2630px, transparent); }

.dock {
  flex: none; width: 2732px; height: 110px; box-sizing: border-box; margin: 4px 0 0 74px; padding: 15px 0 0 3.500px; display: flex;
  border: 2px solid rgba(190, 190, 220, .38); border-radius: 29px; background: linear-gradient(to right, #637b9f, #6e7aa6 18%, #7679a8 40%, #7f77a8 60%, #8a77a9 78%, #9c74a5);
  background-clip: border-box;
}
.defs { position: absolute; }
.cell { flex: none; width: 90.950px; height: 90px; display: flex; flex-direction: column; align-items: center; }
.cell svg { filter: drop-shadow(0 1px 1px rgba(20, 20, 50, .25)); }
.cell text { font-family: Inter, sans-serif; }
.dot { width: 8px; height: 8px; border-radius: 50%; background: #07042c; margin-top: 11px; }
.sep { flex: none; width: 2px; height: 82px; margin: -3px 20px 0; background: #594c7e; }
</style>
